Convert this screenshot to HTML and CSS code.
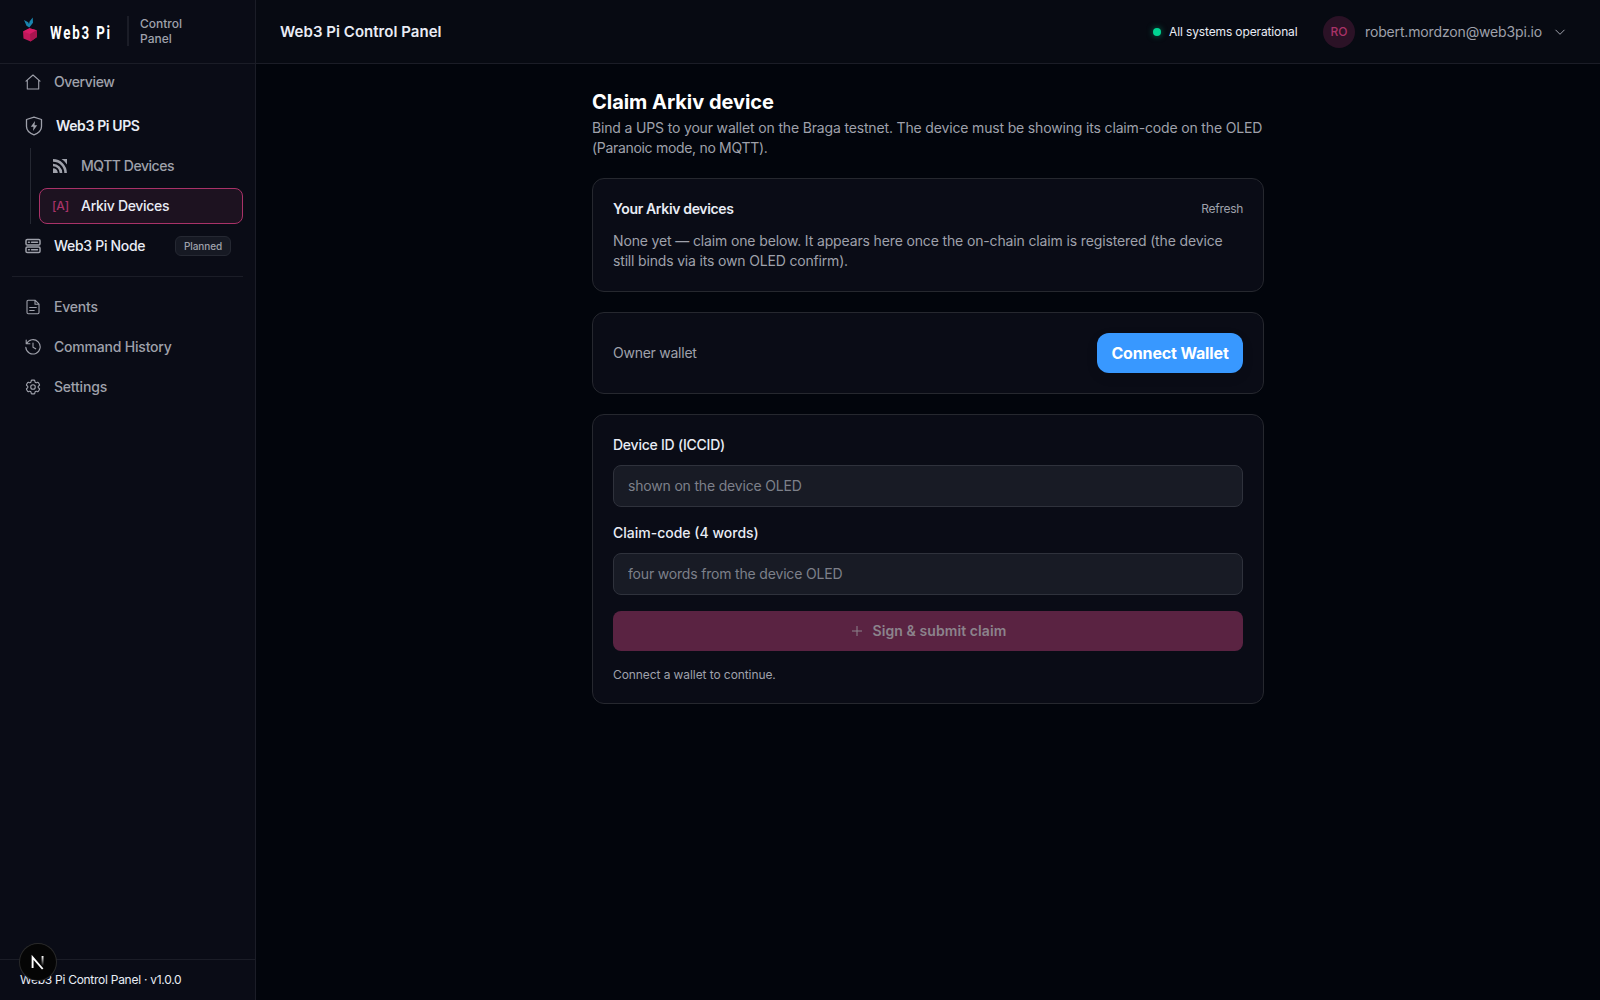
FILE: index.html
```html
<!DOCTYPE html>
<html lang="en">
<head>
    <meta charset="UTF-8">
    <meta name="viewport" content="width=device-width, initial-scale=1.0">
    <title>Web3 Pi Control Panel</title>
    <link rel="stylesheet" href="styles.css">
</head>
<body>
    <aside class="sidebar">
        <div class="brand">
            <svg class="brand-mark" width="16" height="26" viewBox="0 0 16 26">
                <path fill="#c2185b" d="M1 14.500 7.500 11.300 14.700 13.200 15 20 8.600 24.500 1.500 21.500z"/>
                <path fill="#d81b66" d="M1 14.500 7.500 11.300 14.700 13.200 8 17z"/>
                <path fill="#a8154f" d="M8 17l6.700-3.800L15 20l-6.400 4.500z"/>
                <path fill="#1a85ae" d="M2 3l4.200 2.200L7 7l.6-2.600L10.700.5 11 5.800 7.300 10.500 4.500 8.800z"/>
            </svg>
            <span class="brand-name">Web3 Pi</span>
            <span class="brand-sub">Control<br>Panel</span>
        </div>

        <nav class="nav">
            <a class="nav-item">
                <svg class="icon" viewBox="0 0 16 16"><path d="M1 7.200 8 1l7 6.200M2.300 6.200V15h11.400V6.200"/></svg>
                <span class="t-overview">Overview</span>
            </a>
            <a class="nav-item parent">
                <svg class="icon shield" viewBox="0 0 18 20"><path d="M9 1.200 16.500 3.500v7c0 4-3.500 6.800-7.500 8.300-4-1.500-7.500-4.300-7.500-8.300v-7z"/><path class="solid" d="M10 5 5.800 10.700h2.700L8 15l4.200-5.800H9.500z"/></svg>
                <span class="t-ups">Web3 Pi UPS</span>
            </a>
            <div class="subnav">
                <a class="nav-item">
                    <svg class="icon" viewBox="0 0 16 16"><path class="solid" d="M1 10.200A4.800 4.800 0 0 1 5.800 15H1zM9.500 1H15v5.500A15 15 0 0 0 9.500 1z"/><path class="arc" d="M1 7A8 8 0 0 1 9 15M1 2.400A12.600 12.600 0 0 1 13.600 15"/></svg>
                    <span class="t-mqtt">MQTT Devices</span>
                </a>
                <a class="nav-item active">
                    <span class="ark">[A]</span>
                    <span class="t-arkiv">Arkiv Devices</span>
                </a>
            </div>
            <a class="nav-item node">
                <svg class="icon" viewBox="0 0 16 16"><rect class="bold" x="1" y="1.500" width="14" height="5.600" rx="1.300"/><rect class="bold" x="1" y="8.900" width="14" height="5.600" rx="1.300"/><path class="bold" d="M3.500 4.300h.8M6.500 4.300h6M3.500 11.700h.8M6.500 11.700h6"/></svg>
                <span class="t-node">Web3 Pi Node</span>
                <span class="badge"><span>Planned</span></span>
            </a>
            <hr>
            <a class="nav-item">
                <svg class="icon" viewBox="0 0 16 16"><path d="M10 1.200H3.200c-.7 0-1.200.5-1.200 1.200v11.200c0 .7.500 1.200 1.200 1.200h9.600c.7 0 1.200-.5 1.200-1.200V5.200zM10 1.200v4h4M4.700 8.500h6.600M4.700 11.500h4.500"/></svg>
                <span class="t-events">Events</span>
            </a>
            <a class="nav-item">
                <svg class="icon" viewBox="0 0 16 16"><path d="M1.200 1v3.700h3.700M1.500 4.700a7.200 7.200 0 1 1-.7 3.500M8 4v4.300l2.700 1.500"/></svg>
                <span class="t-history">Command History</span>
            </a>
            <a class="nav-item">
                <svg class="icon" viewBox="1.500 1.500 21 21"><path class="gear" d="M9.594 3.940c.090-.542.560-.940 1.110-.940h2.593c.550 0 1.020.398 1.110.940l.213 1.281c.063.374.313.686.645.870.074.040.147.083.220.127.325.196.720.257 1.075.124l1.217-.456a1.125 1.125 0 0 1 1.370.490l1.296 2.247a1.125 1.125 0 0 1-.260 1.431l-1.003.827c-.293.241-.438.613-.430.992a7.723 7.723 0 0 1 0 .255c-.008.378.137.750.430.991l1.004.827c.424.350.534.955.260 1.430l-1.298 2.247a1.125 1.125 0 0 1-1.369.491l-1.217-.456c-.355-.133-.750-.072-1.076.124a6.470 6.470 0 0 1-.220.128c-.331.183-.581.495-.644.869l-.213 1.281c-.090.543-.560.940-1.110.940h-2.594c-.550 0-1.019-.398-1.110-.940l-.213-1.281c-.062-.374-.312-.686-.644-.870a6.520 6.520 0 0 1-.220-.127c-.325-.196-.720-.257-1.076-.124l-1.217.456a1.125 1.125 0 0 1-1.369-.490l-1.297-2.247a1.125 1.125 0 0 1 .260-1.431l1.004-.827c.292-.240.437-.613.430-.991a6.932 6.932 0 0 1 0-.255c.007-.380-.138-.751-.430-.992l-1.004-.827a1.125 1.125 0 0 1-.260-1.430l1.297-2.247a1.125 1.125 0 0 1 1.370-.491l1.216.456c.356.133.751.072 1.076-.124.072-.044.146-.086.220-.128.332-.183.582-.495.644-.869zM15 12a3 3 0 1 1-6 0 3 3 0 0 1 6 0z"/></svg>
                <span class="t-settings">Settings</span>
            </a>
        </nav>

        <div class="sidebar-footer"><span>Web3 Pi Control Panel · v1.0.0</span></div>
    </aside>

    <div class="page">
        <header class="topbar">
            <span class="topbar-title">Web3 Pi Control Panel</span>
            <div class="status"><i class="dot"></i><span>All systems operational</span></div>
            <div class="avatar">RO</div>
            <span class="email">robert.mordzon@web3pi.io</span>
            <svg class="chevron" viewBox="0 0 12 12"><path d="M1.500 3.800 6 8.300l4.500-4.500"/></svg>
        </header>

        <main class="content">
            <h1><span>Claim Arkiv device</span></h1>
            <p class="intro"><span class="l1">Bind a UPS to your wallet on the Braga testnet. The device must be showing its claim-code on the OLED</span><br><span class="l2">(Paranoic mode, no MQTT).</span></p>

            <section class="card">
                <div class="row">
                    <h2>Your Arkiv devices</h2>
                    <a class="refresh">Refresh</a>
                </div>
                <p class="empty"><span class="l1">None yet — claim one below. It appears here once the on-chain claim is registered (the device</span><br><span class="l2">still binds via its own OLED confirm).</span></p>
            </section>

            <section class="card row">
                <span class="owner">Owner wallet</span>
                <button class="connect"><span>Connect Wallet</span></button>
            </section>

            <section class="card form">
                <label for="iccid"><span class="t-iccid">Device ID (ICCID)</span></label>
                <input type="text" id="iccid" placeholder="shown on the device OLED">
                <label for="code"><span class="t-code">Claim-code (4 words)</span></label>
                <input type="text" id="code" placeholder="four words from the device OLED">
                <button class="submit">
                    <svg viewBox="0 0 12 12"><path d="M6 1v10M1 6h10"/></svg>
                    <span>Sign &amp; submit claim</span>
                </button>
                <p class="hint"><span>Connect a wallet to continue.</span></p>
            </section>
        </main>
    </div>

    <div class="dev-badge">
        <svg width="36" height="36" viewBox="0 0 36 36">
            <defs><linearGradient id="fade" x1="0" y1="0" x2="0" y2="1"><stop offset="0" stop-color="#fff"/><stop offset="1" stop-color="#fff" stop-opacity="0"/></linearGradient></defs>
            <path fill="none" stroke="#fff" stroke-width="1.900" d="M12.600 24V13.300L22.700 25"/>
            <rect x="21.600" y="12" width="1.900" height="10" fill="url(#fade)"/>
        </svg>
    </div>
</body>
</html>
```
FILE: styles.css
```css
* { box-sizing: border-box; }
body {
    margin: 0;
    height: 100vh;
    display: flex;
    overflow: hidden;
    background: #02050c;
    color: #e9ecf5;
    font-family: Inter, "Liberation Sans", sans-serif;
    font-size: 14px;
    line-height: 20px;
}
h1, h2, p { margin: 0; }
span { white-space: nowrap; }
button, input { font: inherit; }

/* sidebar */
.sidebar {
    width: 256px;
    flex: none;
    display: flex;
    flex-direction: column;
    background: #0a0c16;
    border-right: 1px solid #1b1d27;
}
.brand {
    height: 64px;
    flex: none;
    display: flex;
    align-items: center;
    padding: 0 22px 1px;
    border-bottom: 1px solid #1b1d27;
}
.brand-mark { margin-top: -3px; }
.brand-name {
    width: 61px;
    margin-left: 12px;
    padding-top: 3px;
    color: #fff;
    font-family: Roboto, sans-serif;
    font-size: 19px;
    font-weight: 700;
    letter-spacing: 2.6px;
    transform: scaleX(.7);
    transform-origin: left;
}
.brand-sub {
    margin-left: 16px;
    padding-left: 11px;
    border-left: 2px solid #1b1d27;
    color: #9fa1ab;
    font-size: 12px;
    font-weight: 500;
    line-height: 15px;
}
.nav { flex: 1; padding: 0 12px; }
.nav-item {
    height: 36px;
    display: flex;
    align-items: center;
    gap: 13px;
    padding: 0 13px;
    color: #9fa1ab;
    font-weight: 500;
}
.nav-item.parent { margin-top: 8px; color: #e9ecf5; font-weight: 600; }
.t-overview, .t-ups { letter-spacing: -.38px; }
.t-mqtt { letter-spacing: -.47px; }
.t-arkiv, .t-node { letter-spacing: -.3px; }
.t-events, .t-history, .t-settings { letter-spacing: -.2px; }
.icon {
    width: 16px;
    height: 16px;
    flex: none;
    fill: none;
    stroke: #9fa1ab;
    stroke-width: 1.1;
    stroke-linejoin: round;
    stroke-linecap: round;
}
.icon.shield { width: 18px; height: 20px; stroke-width: 1.3; }
.icon .solid { fill: #9fa1ab; stroke: none; }
.icon .arc { stroke-width: 2.6; stroke-linecap: butt; }
.icon .bold { stroke-width: 1.5; }
.icon .gear { stroke-width: 1.5; }
.subnav {
    margin: 4px 0 0 18px;
    padding-left: 8px;
    border-left: 1px solid #252832;
}
.subnav .nav-item.active {
    margin-top: 4px;
    padding: 0 12px;
    border: 1px solid #a93268;
    border-radius: 8px;
    background: #1d1220;
    color: #e9ecf5;
}
.ark { width: 16px; color: #a93268; font-size: 12px; letter-spacing: -.1px; }
.nav-item.node { margin-top: 4px; color: #e9ecf5; }
.badge {
    width: 56px;
    height: 20px;
    margin: 0 -1px 0 auto;
    display: flex;
    align-items: center;
    justify-content: center;
    border: 1px solid #252832;
    border-radius: 6px;
    background: #161923;
    color: #9fa1ab;
    font-size: 10px;
    letter-spacing: -.1px;
}
.nav hr { height: 1px; margin: 12px 0; border: 0; background: #1b1d27; }
.nav hr ~ .nav-item { margin-bottom: 4px; }
.sidebar-footer {
    height: 41px;
    padding: 10px 20px;
    border-top: 1px solid #1b1d27;
    font-size: 12px;
    letter-spacing: -.27px;
}

/* top bar */
.page { flex: 1; }
.topbar {
    height: 64px;
    display: flex;
    align-items: center;
    padding: 0 34px 0 24px;
    background: #070a12;
    border-bottom: 1px solid #1b1d27;
}
.topbar-title { margin-right: auto; font-size: 15px; font-weight: 600; letter-spacing: .04px; }
.status {
    width: 145px;
    display: flex;
    align-items: center;
    gap: 8px;
    font-size: 12px;
    letter-spacing: -.13px;
}
.dot {
    width: 8px;
    height: 8px;
    flex: none;
    border-radius: 50%;
    background: #00d492;
    box-shadow: 0 0 6px rgba(0, 212, 146, .5);
}
.avatar {
    width: 32px;
    height: 32px;
    margin-left: 25px;
    border-radius: 50%;
    background: #2b1226;
    color: #a93268;
    font-size: 12px;
    font-weight: 500;
    line-height: 32px;
    text-align: center;
}
.email { width: 178px; margin-left: 10px; color: #9fa1ab; letter-spacing: -.15px; }
.chevron { width: 12px; height: 12px; margin-left: 11px; fill: none; stroke: #9fa1ab; }

/* claim page */
.content { width: 672px; margin: 24px auto 0; }
.content h1 {
    color: #fff;
    font-size: 20px;
    font-weight: 700;
    line-height: 28px;
    letter-spacing: -.04px;
}
.intro { margin: 2px 0 20px; }
.intro, .empty, .owner { color: #9fa1ab; }
.intro .l1 { letter-spacing: -.16px; }
.intro .l2 { letter-spacing: -.31px; }
.card {
    margin-bottom: 20px;
    padding: 20px;
    border: 1px solid #26282f;
    border-radius: 12px;
    background: #0a0c16;
}
.row { display: flex; align-items: center; justify-content: space-between; }
.card h2 { font-size: 14px; font-weight: 600; line-height: 20px; letter-spacing: -.35px; }
.refresh { color: #9fa1ab; font-size: 12px; letter-spacing: -.3px; }
.empty { margin-top: 12px; }
.empty .l1 { letter-spacing: -.14px; }
.empty .l2 { letter-spacing: -.17px; }
.owner { letter-spacing: -.25px; }
.connect {
    width: 146px;
    height: 40px;
    padding: 0;
    border: 0;
    border-radius: 12px;
    background: #3898ff;
    color: #fff;
    font-size: 16px;
    font-weight: 700;
    letter-spacing: -.14px;
    box-shadow: 0 4px 12px rgba(0, 0, 0, .1);
}
.form { display: flex; flex-direction: column; }
.form label { margin-bottom: 10px; font-weight: 500; }
.t-iccid { letter-spacing: -.24px; }
.form input {
    height: 42px;
    margin-bottom: 16px;
    padding: 0 14px 1px;
    border: 1px solid #2f323c;
    border-radius: 8px;
    background: #181b25;
    color: #e9ecf5;
    letter-spacing: -.18px;
}
.form input::placeholder { color: #7d808a; }
.submit {
    height: 40px;
    display: flex;
    align-items: center;
    justify-content: center;
    gap: 10px;
    padding: 0 5px 0 6px;
    border: 0;
    border-radius: 8px;
    background: #5a2342;
    color: #8c838c;
    font-weight: 600;
    letter-spacing: .08px;
}
.submit svg { width: 12px; height: 12px; fill: none; stroke: #8c838c; }
.hint { margin-top: 16px; color: #9fa1ab; font-size: 12px; line-height: 16px; letter-spacing: -.08px; }

.dev-badge {
    position: absolute;
    left: 20px;
    top: 944px;
    width: 36px;
    height: 36px;
    border-radius: 50%;
    background: #050505;
    box-shadow: 0 0 0 1px #2a2a2a;
}
```
